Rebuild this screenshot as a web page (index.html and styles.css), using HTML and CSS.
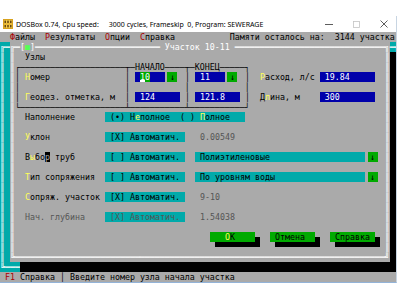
FILE: index.html
```html
<!DOCTYPE html>
<html lang="ru">
<head>
  <meta charset="UTF-8" />
  <title>DOSBox - SEWERAGE</title>
  <link rel="stylesheet" href="styles.css">
</head>
<body>
  <div class="win">

    <!-- Window title bar -->
    <div class="titlebar">
      <svg class="appicon" viewBox="0 0 10 10">
        <rect width="10" height="10" fill="#d8a21e"/>
        <rect x="1" y="1" width="8" height="3.6" fill="#f2c94a"/>
        <rect x="1" y="5.4" width="8" height="3.6" fill="#f2c94a"/>
        <rect x="1.5" y="1.6" width="1.4" height="2.4" fill="#5a3a08"/>
        <rect x="4.3" y="1.6" width="1.4" height="2.4" fill="#5a3a08"/>
        <rect x="7.1" y="1.6" width="1.4" height="2.4" fill="#5a3a08"/>
        <rect x="1.5" y="6" width="1.4" height="2.4" fill="#5a3a08"/>
        <rect x="4.3" y="6" width="1.4" height="2.4" fill="#5a3a08"/>
        <rect x="7.1" y="6" width="1.4" height="2.4" fill="#5a3a08"/>
      </svg>
      <span class="caption">DOSBox 0.74, Cpu speed:</span>
      <span class="caption cap2">3000 cycles, Frameskip&nbsp; 0, Program: SEWERAGE</span>
      <div class="wbtns">
        <svg width="8" height="8" viewBox="0 0 8 8"><path d="M0 4.5H8" stroke="#333" stroke-width="0.8"/></svg>
        <svg width="7" height="7" viewBox="0 0 7 7"><rect x="0.5" y="0.5" width="6" height="6" fill="none" stroke="#c4c4c4" stroke-width="0.8"/></svg>
        <svg width="8" height="8" viewBox="0 0 8 8"><path d="M0.5 0.5L7.5 7.5M7.5 0.5L0.5 7.5" stroke="#333" stroke-width="0.8"/></svg>
      </div>
    </div>

    <!-- DOS text screen, 80x25 -->
    <div class="client">
      <div class="scr">
        <div class="r">  <b class="hr">Ф</b>айлы  <b class="hr">Р</b>езультаты  <b class="hr">О</b>пции  <b class="hr">С</b>правка           Памяти осталось на:  3144 участка </div>
        <div class="r"><span class="tq">╔═</span><span class="fr">╔═[<b class="close">■</b>]═════════════════════════ Участок 10-11 ══════════════════════════════╗</span><span class="tq">═╗</span></div>
        <div class="r"><span class="tq">║ </span><span class="fr">║</span><span class="c">  Узлы</span><span class="fr">║</span><span class="sh">  </span></div>
        <div class="r"><span class="tq">║ </span><span class="fr">║</span><span class="c">┌─────────────────────┬─НАЧАЛО────┬─КОНЕЦ─────┐</span><span class="fr">║</span><span class="sh">  </span></div>
        <div class="r"><span class="tq">║ </span><span class="fr">║</span><span class="c">│ <b class="hk">Н</b>омер               │ <span class="fld f6"> <b class="sel cur">1</b><b class="sel">0</b></span><span class="dd">↓</span> │ <span class="fld f6"> 11</span><span class="dd">↓</span> │  <b class="hk">Р</b>асход, л/с <span class="fld f11"> 19.84</span></span><span class="fr">║</span><span class="sh">  </span></div>
        <div class="r"><span class="tq">║ </span><span class="fr">║</span><span class="c">│                     │           │           │</span><span class="fr">║</span><span class="sh">  </span></div>
        <div class="r"><span class="tq">║ </span><span class="fr">║</span><span class="c">│ <b class="hk">Г</b>еодез. отметка, м  │ <span class="fld f9"> 124</span> │ <span class="fld f9"> 121.8</span> │  Д<b class="hk">л</b>ина, м    <span class="fld f11"> 300</span></span><span class="fr">║</span><span class="sh">  </span></div>
        <div class="r"><span class="tq">║ </span><span class="fr">║</span><span class="c">└─────────────────────┴───────────┴───────────┘</span><span class="fr">║</span><span class="sh">  </span></div>
        <div class="r"><span class="tq">║ </span><span class="fr">║</span><span class="c"><span class="lbl">  Наполнение</span><span class="tf radio"> (•) Н<b class="hk">е</b>полное  ( ) <b class="hk">П</b>олное</span></span><span class="fr">║</span><span class="sh">  </span></div>
        <div class="r"><span class="tq">║ </span><span class="fr">║</span><span class="c"></span><span class="fr">║</span><span class="sh">  </span></div>
        <div class="r"><span class="tq">║ </span><span class="fr">║</span><span class="c"><span class="lbl">  <b class="hk">У</b>клон</span><span class="tf chk"> [X] Автоматич.</span><span class="val dim">0.00549</span></span><span class="fr">║</span><span class="sh">  </span></div>
        <div class="r"><span class="tq">║ </span><span class="fr">║</span><span class="c"></span><span class="fr">║</span><span class="sh">  </span></div>
        <div class="r"><span class="tq">║ </span><span class="fr">║</span><span class="c"><span class="lbl">  В<b class="hk">ы</b>бо<b class="blk">р</b> труб</span><span class="tf chk"> [ ] Автоматич.</span><span class="tf combo"> Полиэтиленовые</span><span class="dd">↓</span></span><span class="fr">║</span><span class="sh">  </span></div>
        <div class="r"><span class="tq">║ </span><span class="fr">║</span><span class="c"></span><span class="fr">║</span><span class="sh">  </span></div>
        <div class="r"><span class="tq">║ </span><span class="fr">║</span><span class="c"><span class="lbl">  <b class="hk">Т</b>ип сопряжения</span><span class="tf chk"> [ ] Автоматич.</span><span class="tf combo"> По уровням воды</span><span class="dd">↓</span></span><span class="fr">║</span><span class="sh">  </span></div>
        <div class="r"><span class="tq">║ </span><span class="fr">║</span><span class="c"></span><span class="fr">║</span><span class="sh">  </span></div>
        <div class="r"><span class="tq">║ </span><span class="fr">║</span><span class="c"><span class="lbl">  <b class="hk">С</b>опряж. участок</span><span class="tf chk"> [X] Автоматич.</span><span class="val dim">9-10</span></span><span class="fr">║</span><span class="sh">  </span></div>
        <div class="r"><span class="tq">║ </span><span class="fr">║</span><span class="c"></span><span class="fr">║</span><span class="sh">  </span></div>
        <div class="r"><span class="tq">║ </span><span class="fr">║</span><span class="c"><span class="lbl dim">  Нач. глубина</span><span class="tf chk dim"> [X] Автоматич.</span><span class="val dim">1.54038</span></span><span class="fr">║</span><span class="sh">  </span></div>
        <div class="r"><span class="tq">║ </span><span class="fr">║</span><span class="c"></span><span class="fr">║</span><span class="sh">  </span></div>
        <div class="r"><span class="tq">║ </span><span class="fr">║</span><span class="c"><span class="btns"><span class="btn">   <b class="hk">O</b>K    </span><span class="btn"> Отмена  </span><span class="btn"> Справка </span></span></span><span class="fr">║</span><span class="sh">  </span></div>
        <div class="r"><span class="tq">║ </span><span class="fr">║</span><span class="c"></span><span class="fr">║</span><span class="sh">  </span></div>
        <div class="r"><span class="tq">║ </span><span class="fr">╚══════════════════════════════════════════════════════════════════════════╝</span><span class="sh">  </span></div>
        <div class="r"><span class="tq">╚═══</span><span class="sh rest"></span></div>
        <div class="r"> <b class="hr">F1</b> Справка │ Введите номер узла начала участка</div>
      </div>
    </div>
  </div>
</body>
</html>
```

FILE: styles.css
```css
* {
  box-sizing: border-box;
  margin: 0;
  padding: 0;
}

body {
  background: #ffffff;
  font-family: "Noto Sans", "Liberation Sans", sans-serif;
}

.win {
  width: 397px;
  margin-top: 16px;
  border-right: 1px solid #c8d5e2;
  border-bottom: 1px solid #93b3d8;
}

/* title bar */
.titlebar {
  height: 16px;
  display: flex;
  align-items: center;
  font-size: 7px;
  color: #000;
}

.appicon {
  width: 10px;
  height: 10px;
  margin-left: 3px;
  margin-right: 3px;
}

.caption {
  white-space: pre;
}

.cap2 {
  margin-left: 10px;
}

.wbtns {
  margin-left: auto;
  display: flex;
  align-items: center;
  gap: 20px;
  padding-right: 8px;
}

/* text mode screen */
.client {
  width: 396px;
  overflow: hidden;
}

.scr {
  width: 400px;
  font-family: "DejaVu Sans Mono", monospace;
  font-size: 8.305px;
  line-height: 10px;
  color: #000;
  background: #aaaaaa;
}

.r {
  height: 10px;
  white-space: pre;
}

.scr span,
.scr b {
  display: inline-block;
  vertical-align: top;
  height: 10px;
  font-weight: normal;
}

.tq {
  background: #00aaaa;
  color: #ffffff;
}

.fr {
  color: #ffffff;
}

.sh {
  background: #000000;
}

.sh.rest {
  width: 380px;
}

.c {
  width: 370px;
}

.hk {
  color: #ffff55;
}

.hr {
  color: #aa0000;
}

.close {
  color: #55ff55;
}

.dim {
  color: #555555;
}

/* input fields */
.fld {
  background: #0000aa;
  color: #ffffff;
}

.f6 { width: 30px; }
.f9 { width: 45px; }
.f11 { width: 55px; }

.sel {
  background: #00aa00;
}

.cur {
  box-shadow: inset 0 -2px 0 #ffffff;
}

.dd {
  width: 10px;
  margin: 0 2.5px;
  background: #00aa00;
  color: #000;
  text-align: center;
}

.blk {
  background: #000;
  color: #aaaaaa;
}

/* form rows */
.lbl {
  width: 90px;
}

.tf {
  background: #00aaaa;
}

.radio {
  width: 140px;
}

.chk {
  width: 80px;
}

.val {
  margin-left: 15px;
}

.combo {
  width: 170px;
  margin-left: 10px;
}

/* buttons */
.btns {
  padding-left: 195px;
}

.btn {
  background: #00aa00;
  color: #000;
  box-shadow: 5px 5px 0 #000;
}

.btn + .btn {
  margin-left: 15px;
}
```
